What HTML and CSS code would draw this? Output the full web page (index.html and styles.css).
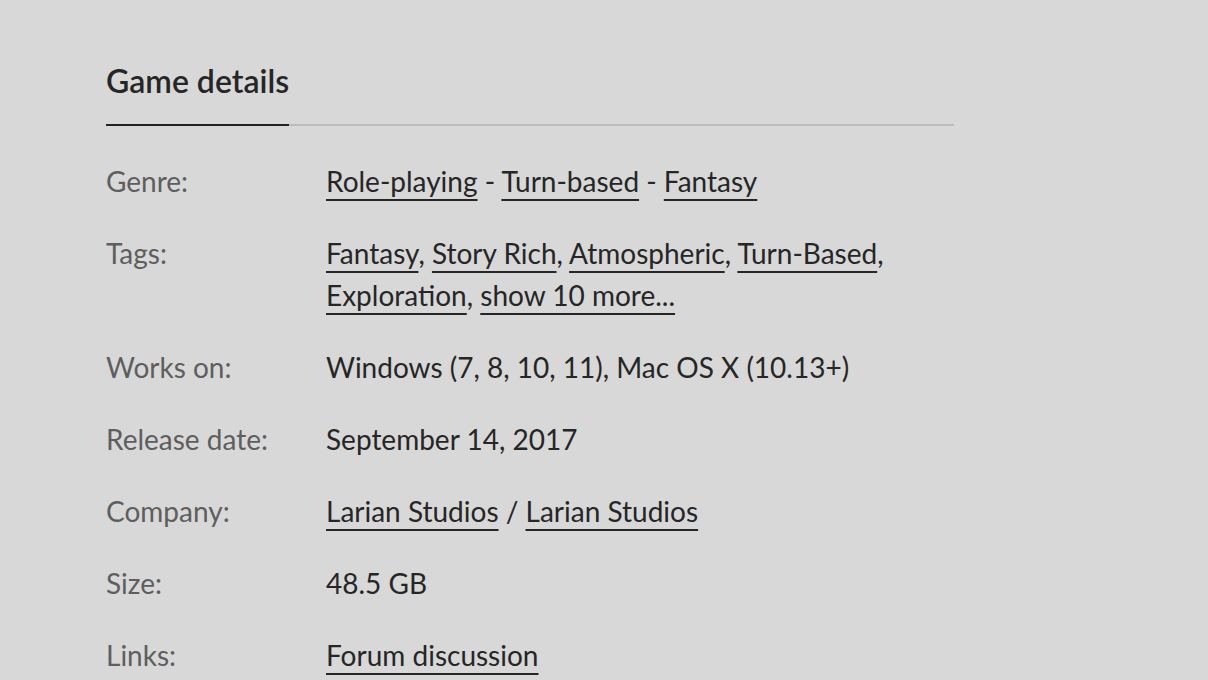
FILE: index.html
```html
<!DOCTYPE html>
<html>
<head>
<meta charset="utf-8">
<link rel="stylesheet" href="styles.css">
</head>
<body>
<section class="details">
  <div class="header">
    <h2 class="title">Game details</h2>
  </div>
  <div class="rows">
    <div class="row">
      <div class="label">Genre:</div>
      <div class="value"><a class="link">Role-playing</a> - <a class="link">Turn-based</a> - <a class="link">Fantasy</a></div>
    </div>
    <div class="row">
      <div class="label">Tags:</div>
      <div class="value"><a class="link">Fantasy</a>, <a class="link">Story Rich</a>, <a class="link">Atmospheric</a>, <a class="link">Turn-Based</a>, <a class="link">Exploration</a>, <a class="link">show 10 more...</a></div>
    </div>
    <div class="row">
      <div class="label">Works on:</div>
      <div class="value">Windows (7, 8, 10, 11), Mac OS X (10.13+)</div>
    </div>
    <div class="row">
      <div class="label">Release date:</div>
      <div class="value">September 14, 2017</div>
    </div>
    <div class="row">
      <div class="label">Company:</div>
      <div class="value"><a class="link">Larian Studios</a> / <a class="link">Larian Studios</a></div>
    </div>
    <div class="row">
      <div class="label">Size:</div>
      <div class="value">48.5 GB</div>
    </div>
    <div class="row">
      <div class="label">Links:</div>
      <div class="value"><a class="link">Forum discussion</a></div>
    </div>
  </div>
</section>
</body>
</html>
```

FILE: styles.css
```css
html, body {
  margin: 0;
  padding: 0;
  background: #d8d8d8;
}
body {
  font-family: Lato, "Open Sans", sans-serif;
  color: #262626;
  overflow: hidden;
}
.details {
  width: 848px;
  margin-left: 106px;
  padding-top: 59px;
}
.header {
  border-bottom: 2px solid #bcbcbc;
  display: flex;
}
.title {
  margin: 0;
  font-size: 32px;
  font-weight: 600;
  line-height: 44px;
  padding-bottom: 21px;
  margin-bottom: -2px;
  border-bottom: 2px solid #222;
  color: #262626;
}
.rows {
  padding-top: 34px;
}
.row {
  display: flex;
  font-size: 28px;
  line-height: 42px;
  padding-bottom: 30px;
}
.label {
  width: 220px;
  flex: none;
  color: #5e5e5e;
}
.value {
  flex: 1;
  color: #262626;
}
.link {
  color: #262626;
  text-decoration: underline;
  text-decoration-thickness: 2px;
  text-underline-offset: 7px;
}
```
